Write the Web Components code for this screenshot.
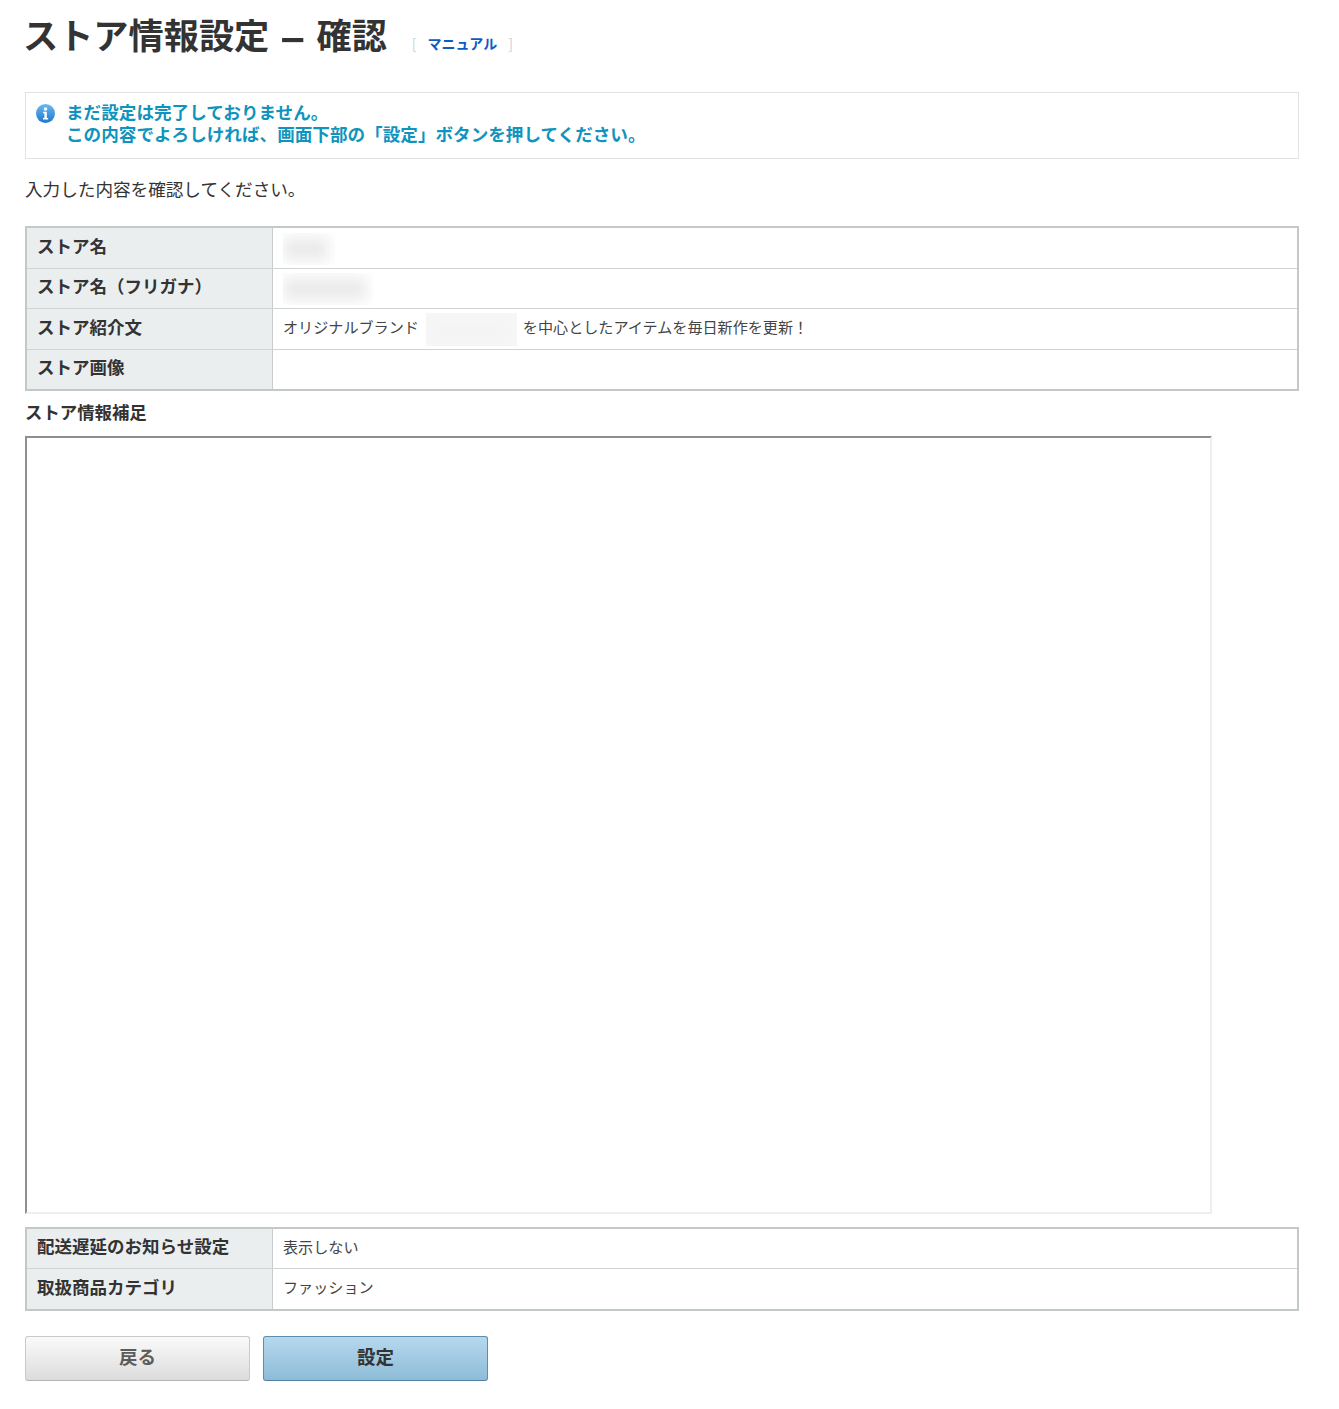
<!DOCTYPE html>
<html lang="ja">
<head>
<meta charset="utf-8">
<title>ストア情報設定 - 確認</title>
<style>
  html, body { margin: 0; background: #fff; }
  body {
    font-family: "Noto Sans CJK JP", "Liberation Sans", sans-serif;
    color: #333;
  }
  .dash { display: inline-block; transform: scale(1.35, 1.25); margin: 0 6px; }
</style>
</head>
<body>
<store-page>
  <page-title manual="マニュアル">ストア情報設定 <span class="dash">–</span> 確認</page-title>
  <notice-box>
    <div>まだ設定は完了しておりません。</div>
    <div>この内容でよろしければ、画面下部の「設定」ボタンを押してください。</div>
  </notice-box>
  <p-lead>入力した内容を確認してください。</p-lead>
  <info-table>
    <info-row h="41" label="ストア名"><blur-mask w="52" h="32" soft></blur-mask></info-row>
    <info-row h="40" label="ストア名（フリガナ）"><blur-mask w="90" h="32" soft></blur-mask></info-row>
    <info-row h="41" label="ストア紹介文">オリジナルブランド<blur-mask w="91" h="33" gap="7"></blur-mask>を中心としたアイテムを毎日新作を更新！</info-row>
    <info-row h="39" label="ストア画像"></info-row>
  </info-table>
  <sub-heading>ストア情報補足</sub-heading>
  <frame-box></frame-box>
  <info-table>
    <info-row h="40" label="配送遅延のお知らせ設定">表示しない</info-row>
    <info-row h="40" label="取扱商品カテゴリ">ファッション</info-row>
  </info-table>
  <button-bar>
    <action-button>戻る</action-button>
    <action-button primary>設定</action-button>
  </button-bar>
</store-page>
<script>
'use strict';

// Small helper so each element only has to give its markup.
class ShadowElement extends HTMLElement {
  constructor() {
    super();
    this.attachShadow({ mode: 'open' }).innerHTML = this.markup();
  }
}

class StorePage extends ShadowElement {
  markup() {
    return `
      <style>
        :host { display: block; width: 1274px; padding: 14px 0 28px 25px; }
      </style>
      <slot></slot>`;
  }
}

class PageTitle extends ShadowElement {
  markup() {
    return `
      <style>
        :host { display: flex; align-items: center; height: 44px; margin-bottom: 34px; }
        h1 { margin: 0 0 5px -2px; font-size: 35.2px; line-height: 44px; font-weight: 700; color: #333; white-space: nowrap; }
        .manual { margin: 14px 0 0 25px; font-size: 14px; line-height: 20px; color: #c8d0d8; display: flex; gap: 11px; }
        a { color: #0b5cc4; text-decoration: none; font-weight: 700; }
      </style>
      <h1><slot></slot></h1>
      <div class="manual"><span>[</span><a href="#">${this.getAttribute('manual')}</a><span>]</span></div>`;
  }
}

class NoticeBox extends ShadowElement {
  markup() {
    return `
      <style>
        :host {
          display: flex; gap: 12px; height: 65px;
          border: 1px solid #e3e3e3; padding: 0 0 0 10px; align-items: center;
          color: #0f94bd; font-size: 17.6px; line-height: 22px; font-weight: 700;
        }
        svg { flex: none; align-self: flex-start; margin-top: 11px; }
        .text { padding-bottom: 6px; margin-left: -1px; white-space: nowrap; }
      </style>
      <svg width="19" height="19" viewBox="0 0 20 20">
        <defs><linearGradient id="g" x1="0" y1="0" x2="0" y2="1">
          <stop offset="0" stop-color="#6cb8f0"/><stop offset="1" stop-color="#1c78cf"/>
        </linearGradient></defs>
        <circle cx="10" cy="10" r="10" fill="url(#g)"/>
        <circle cx="10" cy="5.2" r="1.9" fill="#fff"/>
        <path d="M7.4 8.2h4v6.6h1.4v1.6H7.4v-1.6h1.4V9.8H7.4z" fill="#fff"/>
      </svg>
      <div class="text"><slot></slot></div>`;
  }
}

class PLead extends ShadowElement {
  markup() {
    return `
      <style>
        :host { display: block; margin: 18px 0 25px; font-size: 17.6px; line-height: 24px; color: #333; }
      </style>
      <slot></slot>`;
  }
}

class InfoTable extends ShadowElement {
  markup() {
    return `
      <style>
        :host { display: block; border: 2px solid #c3c9c9; }
      </style>
      <slot></slot>`;
  }
}

class InfoRow extends ShadowElement {
  markup() {
    return `
      <style>
        :host {
          display: grid; grid-template-columns: 246px 1fr; box-sizing: border-box;
          height: ${this.getAttribute('h')}px; border-bottom: 1px solid #d0d4d4;
        }
        :host(:last-child) { border-bottom: 0; height: auto; min-height: ${this.getAttribute('h')}px; }
        .label {
          display: flex; align-items: center; padding: 0 0 6px 10px; background: #ebeeef;
          border-right: 1px solid #c8cccc; font-size: 17.5px; font-weight: 700; color: #333;
        }
        .value { display: flex; align-items: center; padding: 0 0 6px 10px; font-size: 15.1px; color: #444; white-space: nowrap; }
      </style>
      <div class="label">${this.getAttribute('label')}</div>
      <div class="value"><slot></slot></div>`;
  }
}

class BlurMask extends ShadowElement {
  markup() {
    let w = this.getAttribute('w');
    let h = this.getAttribute('h');
    let gap = this.getAttribute('gap') || 0;
    let soft = this.hasAttribute('soft');
    return `
      <style>
        :host { display: block; flex: none; margin: 0 ${gap ? 6 : 0}px -7px ${gap}px; }
        .clip { width: ${w}px; height: ${h}px; overflow: hidden; background: ${soft ? '#fefefe' : '#f7f7f7'}; }
        .smear { margin: 5px 7px 5px 1px; height: ${h - 10}px; background: ${soft ? '#ebebeb' : '#f4f4f4'}; filter: blur(6px); }
      </style>
      <div class="clip"><div class="smear"></div></div>`;
  }
}

class SubHeading extends ShadowElement {
  markup() {
    return `
      <style>
        :host { display: block; margin: 8px 0 11px; font-size: 17.4px; line-height: 26px; font-weight: 700; color: #333; }
      </style>
      <slot></slot>`;
  }
}

class FrameBox extends ShadowElement {
  markup() {
    return `
      <style>
        :host {
          display: block; box-sizing: border-box; width: 1187px; height: 778px; margin-bottom: 13px;
          border: 2px solid #eee; border-top-color: #8f8f8f; border-left-color: #8f8f8f;
        }
      </style>`;
  }
}

class ButtonBar extends ShadowElement {
  markup() {
    return `
      <style>
        :host { display: flex; gap: 13px; margin-top: 25px; }
      </style>
      <slot></slot>`;
  }
}

class ActionButton extends ShadowElement {
  markup() {
    return `
      <style>
        :host { display: block; }
        button {
          display: block; width: 225px; height: 45px; padding: 0 0 5px; border-radius: 3px;
          border: 1px solid #c9c9c9; border-bottom-color: #b5b5b5;
          background: linear-gradient(#fafafa, #dcdcdc);
          font: 700 18.5px "Noto Sans CJK JP", sans-serif; color: #5c5c5c;
        }
        :host([primary]) button {
          border-color: #5b8eb0; border-bottom-color: #4f80a3;
          background: linear-gradient(#b6d8ed, #8dbcd8); color: #333;
        }
      </style>
      <button type="button"><slot></slot></button>`;
  }
}

customElements.define('store-page', StorePage);
customElements.define('page-title', PageTitle);
customElements.define('notice-box', NoticeBox);
customElements.define('p-lead', PLead);
customElements.define('info-table', InfoTable);
customElements.define('info-row', InfoRow);
customElements.define('blur-mask', BlurMask);
customElements.define('sub-heading', SubHeading);
customElements.define('frame-box', FrameBox);
customElements.define('button-bar', ButtonBar);
customElements.define('action-button', ActionButton);
</script>
</body>
</html>
